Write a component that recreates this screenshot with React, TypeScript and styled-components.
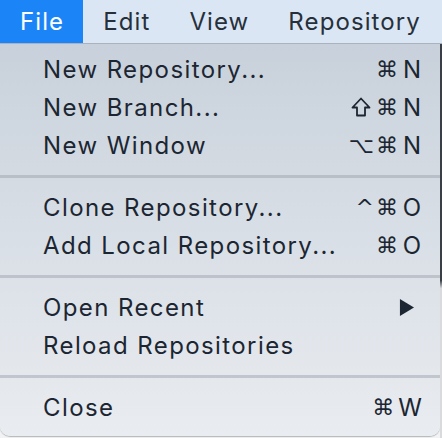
import styled, { createGlobalStyle } from 'styled-components'

const GlobalStyle = createGlobalStyle`
  html, body {
    margin: 0;
    padding: 0;
    background: #f4f5f6;
  }
  body {
    font-family: Inter, "Noto Sans", "DejaVu Sans", sans-serif;
    -webkit-font-smoothing: antialiased;
  }
`

type Shortcut = {
  mods: string
  key: string
}

type Entry =
  | { kind: 'item'; label: string; shortcut?: Shortcut; submenu?: boolean }
  | { kind: 'separator' }

const entries: Entry[] = [
  { kind: 'item', label: 'New Repository...', shortcut: { mods: '⌘', key: 'N' } },
  { kind: 'item', label: 'New Branch...', shortcut: { mods: 'shift', key: 'N' } },
  { kind: 'item', label: 'New Window', shortcut: { mods: '⌥⌘', key: 'N' } },
  { kind: 'separator' },
  { kind: 'item', label: 'Clone Repository...', shortcut: { mods: '^⌘', key: 'O' } },
  { kind: 'item', label: 'Add Local Repository...', shortcut: { mods: '⌘', key: 'O' } },
  { kind: 'separator' },
  { kind: 'item', label: 'Open Recent', submenu: true },
  { kind: 'item', label: 'Reload Repositories' },
  { kind: 'separator' },
  { kind: 'item', label: 'Close', shortcut: { mods: '⌘', key: 'W' } },
]

const barItems = ['File', 'Edit', 'View', 'Repository']

const ShiftIcon = () => (
  <ShiftSvg viewBox='0 0 20 20'>
    <path d='M10 1.5 L18.5 10.5 H14 V18.5 H6 V10.5 H1.5 Z' />
  </ShiftSvg>
)

const App = () => {
  return (
    <>
      <GlobalStyle />
      <Screen>
        <MenuBar>
          {barItems.map((name, i) => (
            <BarItem key={name} active={i === 0}>{name}</BarItem>
          ))}
        </MenuBar>
        <Below>
          <Menu>
            {entries.map((entry, i) =>
              entry.kind === 'separator' ? (
                <Separator key={i} />
              ) : (
                <Row key={i}>
                  <Label>{entry.label}</Label>
                  {entry.shortcut && (
                    <Keys>
                      {entry.shortcut.mods === 'shift'
                        ? <><ShiftIcon /><Mods>⌘</Mods></>
                        : <Mods>{entry.shortcut.mods}</Mods>}
                      <Key>{entry.shortcut.key}</Key>
                    </Keys>
                  )}
                  {entry.submenu && <Arrow viewBox='0 0 16 18'><path d='M1 0 L16 9 L1 18 Z' /></Arrow>}
                </Row>
              )
            )}
          </Menu>
          <Edge />
        </Below>
      </Screen>
    </>
  )
}

const Screen = styled.div`
  width: 442px;
  height: 438px;
  overflow: hidden;
  display: flex;
  flex-direction: column;
`

const MenuBar = styled.div`
  height: 44px;
  display: flex;
  align-items: stretch;
  background: #dbe6f4;
  border-bottom: 1px solid #a9b2be;
  box-sizing: border-box;
`

const BarItem = styled.div<{ active: boolean }>`
  display: flex;
  align-items: center;
  padding: 0 19px 0 20px;
  font-size: 24px;
  letter-spacing: 1.1px;
  color: ${props => props.active ? '#ffffff' : '#26303b'};
  background: ${props => props.active ? '#1b85f7' : 'transparent'};
`

const Below = styled.div`
  flex: 1;
  display: flex;
  background: linear-gradient(#c4ccd5, #dde1e5 60%, #f2f3f4);
`

const Menu = styled.div`
  width: 440px;
  height: 392px;
  box-sizing: border-box;
  padding: 6px 0 9px;
  border-radius: 0 0 10px 10px;
  background: linear-gradient(#c8d1db, #d9dfe6 50%, #e9ecf0);
  box-shadow: 0 1px 1px rgba(0, 0, 0, 0.25);
  display: flex;
  flex-direction: column;
`

const Edge = styled.div`
  flex: 1;
  background: linear-gradient(#3a3f46, #3a3f46 60%, #d8dadc 62%);
`

const Row = styled.div`
  height: 38px;
  display: flex;
  align-items: center;
  padding: 0 18px 0 43px;
  color: #1c2632;
  font-size: 24px;
  letter-spacing: 1.4px;
`

const Label = styled.span`
  flex: 1;
`

const Keys = styled.span`
  display: flex;
  align-items: center;
  gap: 2px;
  letter-spacing: 0;
`

const Mods = styled.span`
  font-family: "DejaVu Sans", sans-serif;
  font-size: 22px;
  letter-spacing: 2px;
`

const ShiftSvg = styled.svg`
  width: 20px;
  height: 20px;
  margin-right: 3px;
  fill: none;
  stroke: #1c2632;
  stroke-width: 1.8;
  stroke-linejoin: round;
`

const Key = styled.span`
  font-size: 24px;
  min-width: 20px;
  text-align: center;
`

const Arrow = styled.svg`
  width: 15px;
  height: 17px;
  margin-right: 8px;
  fill: #1c2632;
`

const Separator = styled.div`
  height: 24px;
  display: flex;
  align-items: center;

  &::before {
    content: '';
    display: block;
    width: 100%;
    height: 3px;
    background: rgba(150, 158, 168, 0.45);
  }
`

export default App
